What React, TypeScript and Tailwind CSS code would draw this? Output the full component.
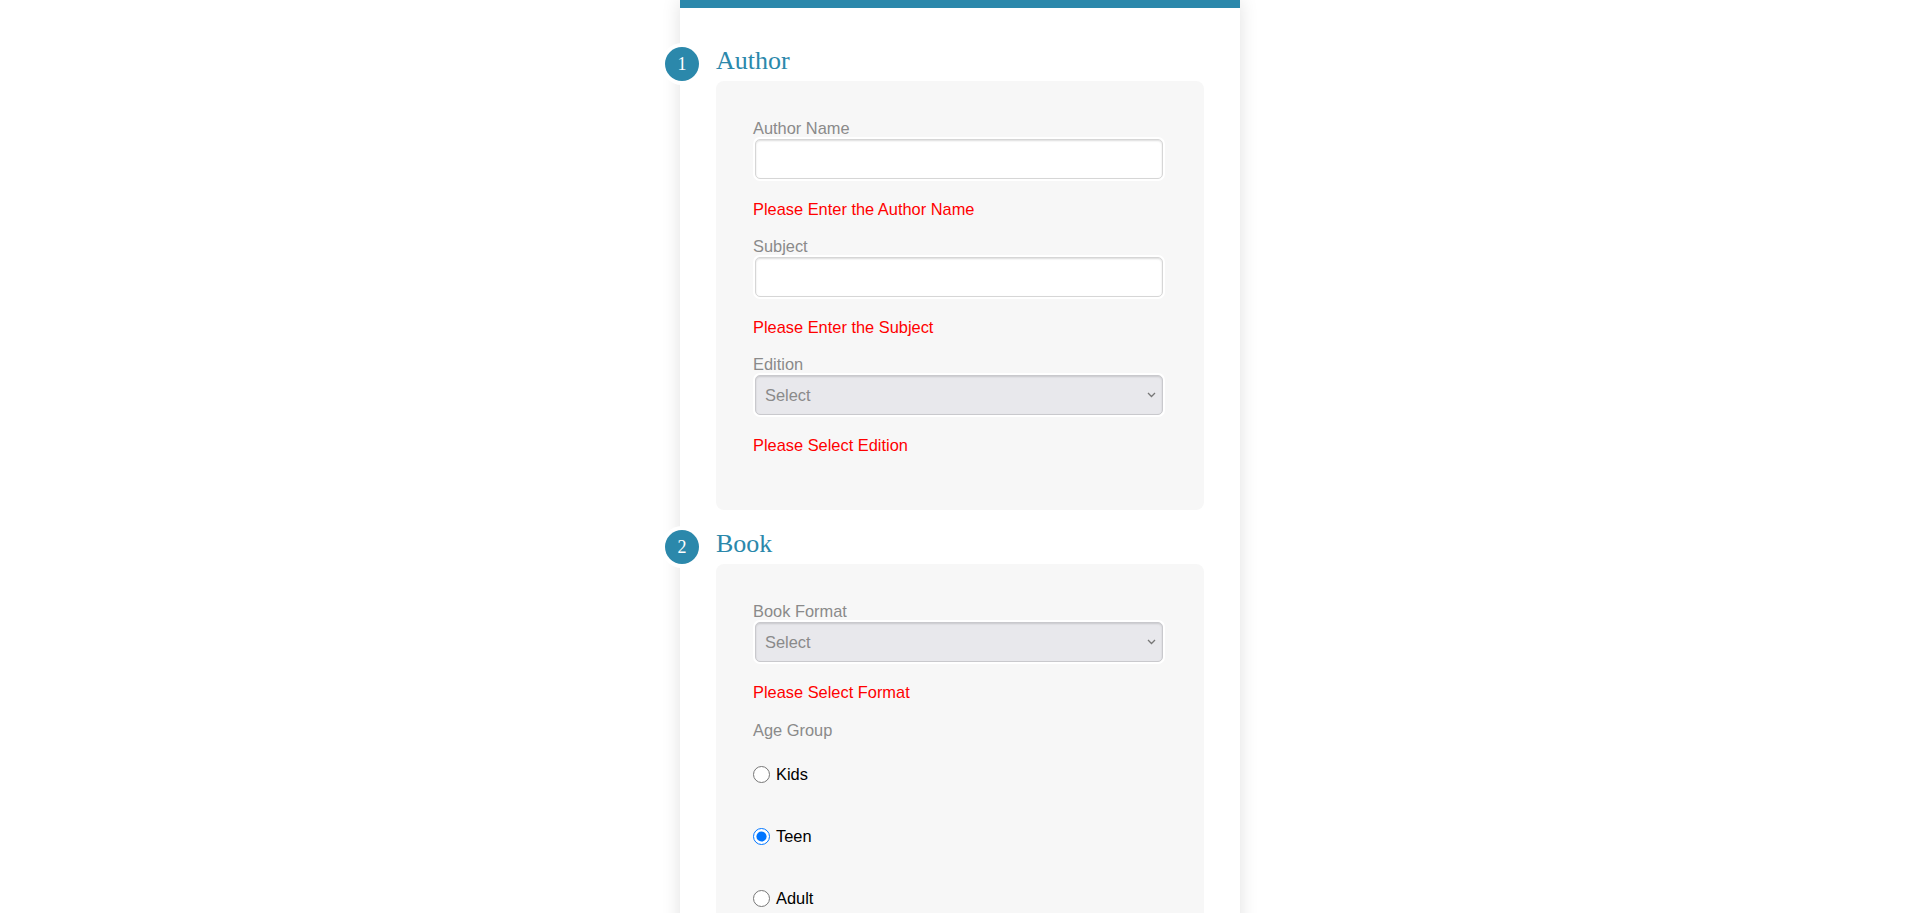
import type { ReactNode } from "react";

const teal = "bg-[#2b88ab]";

function Section({ number, title, className = "", children }: { number: string; title: string; className?: string; children: ReactNode }) {
  return (
    <section className={className}>
      <div className="relative pl-9">
        <span
          className={`absolute -left-[15px] -top-[0.5px] flex h-[34px] w-[34px] items-center justify-center rounded-full ${teal} font-['Liberation_Serif',serif] text-[18px] leading-none text-white ring-4 ring-white`}
        >
          {number}
        </span>
        <h2 className="font-['Liberation_Serif',serif] text-[26px] leading-[28px] text-[#2b88ab]">{title}</h2>
      </div>
      <div className="mx-9 mt-[6px] rounded-lg bg-[#f7f7f7] px-[37px] pt-[38px] pb-[56px]">{children}</div>
    </section>
  );
}

function Label({ children, className = "" }: { children: ReactNode; className?: string }) {
  return <label className={`block text-[16.4px] leading-[18px] text-[#8a8a8a] ${className}`}>{children}</label>;
}

function ErrorText({ children }: { children: ReactNode }) {
  return <p className="mt-[21px] text-[16.4px] leading-[18px] text-[#ff0000]">{children}</p>;
}

function TextField({ label, error, first }: { label: string; error: string; first?: boolean }) {
  return (
    <div>
      <Label className={first ? "" : "mt-[19px]"}>{label}</Label>
      <input
        type="text"
        className="mt-[2px] ml-[2px] block h-10 w-[408px] rounded-[5px] border border-[#d6d6d6] bg-white px-2 shadow-[inset_0_1px_2px_rgba(0,0,0,0.14),0_0_0_2px_#ffffff] outline-none"
      />
      <ErrorText>{error}</ErrorText>
    </div>
  );
}

function SelectField({ label, error, first }: { label: string; error: string; first?: boolean }) {
  return (
    <div>
      <Label className={first ? "" : "mt-[19px]"}>{label}</Label>
      <div className="relative mt-[2px] ml-[2px] w-[408px]">
        <select
          defaultValue=""
          className="block h-10 w-full appearance-none rounded-[5px] border border-[#c9c9cd] bg-[#e8e8ec] pl-[9px] text-[16.4px] text-[#8a8a8a] shadow-[inset_0_1px_2px_rgba(0,0,0,0.14),0_0_0_2px_#ffffff] outline-none"
        >
          <option value="">Select</option>
        </select>
        <svg
          className="pointer-events-none absolute right-[7px] top-1/2 h-[6px] w-[9px] -translate-y-1/2"
          viewBox="0 0 9 6"
          fill="none"
          stroke="#777"
          strokeWidth="1.3"
        >
          <path d="M1 1l3.5 3.5L8 1" />
        </svg>
      </div>
      <ErrorText>{error}</ErrorText>
    </div>
  );
}

function Radio({ label, checked }: { label: string; checked?: boolean }) {
  return (
    <label className="flex h-[18px] items-center gap-[6px] text-[16.4px] text-black">
      <input type="radio" name="age" defaultChecked={checked} className="m-0 h-[17px] w-[17px]" />
      {label}
    </label>
  );
}

export default function App() {
  return (
    <div className="min-h-screen bg-white font-['Liberation_Sans',Arial,sans-serif]">
      <div className="mx-auto min-h-screen w-[560px] bg-white shadow-[0_0_18px_rgba(0,0,0,0.12)]">
        <div className={`h-2 ${teal}`} />
        <div className="pt-[39px] pb-10">
          <Section number="1" title="Author">
            <TextField label="Author Name" error="Please Enter the Author Name" first />
            <TextField label="Subject" error="Please Enter the Subject" />
            <SelectField label="Edition" error="Please Select Edition" />
          </Section>

          <Section number="2" title="Book" className="mt-[20px]">
            <SelectField label="Book Format" error="Please Select Format" first />
            <Label className="mt-[20px]">Age Group</Label>
            <div className="mt-[26px] flex flex-col gap-[44px]">
              <Radio label="Kids" />
              <Radio label="Teen" checked />
              <Radio label="Adult" />
            </div>
          </Section>
        </div>
      </div>
    </div>
  );
}
